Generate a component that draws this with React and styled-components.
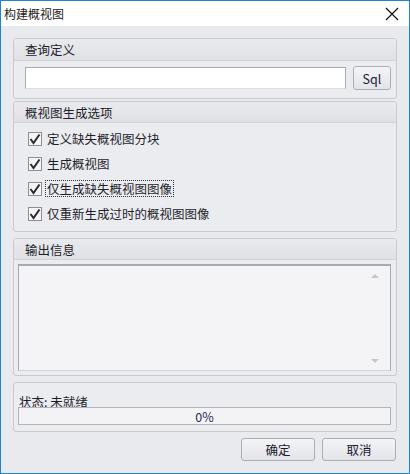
import styled, { createGlobalStyle } from 'styled-components';

const Global = createGlobalStyle`
  html, body { margin: 0; padding: 0; background: #fff; }
  * { box-sizing: border-box; }
`;

const Window = styled.div`
  width: 410px;
  height: 474px;
  border: 1px solid #1a84d8;
  background: #e9eaee;
  display: flex;
  flex-direction: column;
  font-family: "Noto Sans CJK SC", "Noto Sans", sans-serif;
  font-size: 12px;
  color: #1e1e2a;
`;

const TitleBar = styled.div`
  height: 25px;
  background: #fff;
  display: flex;
  align-items: center;
  justify-content: space-between;
  padding: 0 10px 0 3px;
  font-size: 12px;
  color: #222;
  flex-shrink: 0;
`;

const Body = styled.div`
  flex: 1;
  display: flex;
  flex-direction: column;
  padding: 12px 12px 0 12px;
`;

const Group = styled.div`
  border: 1px solid #c9cacd;
  border-radius: 3px;
  background: #ebecf0;
  margin-bottom: ${p => p.$gap || 0}px;
  height: ${p => p.$h}px;
  display: flex;
  flex-direction: column;
  overflow: hidden;
`;

const GroupHeader = styled.div`
  height: ${p => p.$h || 21}px;
  background: linear-gradient(#e9eaee, #e0e1e5);
  border-bottom: 1px solid #d3d4d8;
  padding-left: 11px;
  display: flex;
  align-items: center;
  font-size: 12.5px;
  flex-shrink: 0;
`;

const Row = styled.div`
  display: flex;
  align-items: center;
  gap: 7px;
  padding: 5px 5px 0 11px;
`;

const TextInput = styled.div`
  flex: 1;
  height: 22px;
  background: #fff;
  border: 1px solid #a9abb4;
  border-bottom-color: #dcdde2;
`;

const Button = styled.div`
  width: ${p => p.$w}px;
  height: ${p => p.$ht || 23}px;
  border: 1px solid #adaeb3;
  border-radius: 3px;
  background: linear-gradient(#f3f4f6, #e3e4e8);
  display: flex;
  align-items: center;
  justify-content: center;
  font-size: 12.5px;
  color: #1a1a30;
`;

const CheckList = styled.div`
  display: flex;
  flex-direction: column;
  padding: 7px 0 0 14px;
  gap: 8px;
`;

const CheckRow = styled.div`
  display: flex;
  align-items: center;
  height: 17px;
  gap: 3px;
  font-size: 12.5px;
`;

const Label = styled.span`
  padding: 0 1px;
  line-height: 15px;
  border: 1px dotted ${p => (p.$focus ? '#333' : 'transparent')};
`;

const Scroller = styled.div`
  position: relative;
  margin: 4px 5px 0 4px;
  height: 107px;
  border: 1px solid #a8aab2;
  border-top-width: 2px;
  border-bottom-color: #d2d3d8;
  background: #f4f4f6;
`;

const Arrow = styled.div`
  position: absolute;
  right: 11px;
  width: 0;
  height: 0;
  border-left: 4px solid transparent;
  border-right: 4px solid transparent;
  ${p => (p.$down
    ? 'bottom: 7px; border-top: 4px solid #c6c7cc;'
    : 'top: 8px; border-bottom: 4px solid #c6c7cc;')}
`;

const Status = styled.div`
  padding: 9px 0 0 5px;
  font-size: 12.5px;
  height: 24px;
`;

const Progress = styled.div`
  margin: 0 5px 0 4px;
  height: 18px;
  border: 1px solid #b3b4ba;
  background: #f3f3f5;
  display: flex;
  align-items: center;
  justify-content: center;
  font-size: 12.5px;
  color: #2a2a55;
`;

const Footer = styled.div`
  display: flex;
  justify-content: flex-end;
  gap: 7px;
  padding: 6px 1px 0 0;
`;

const Check = () => (
  <svg width="14" height="14" viewBox="0 0 14 14">
    <rect x="0.5" y="0.5" width="13" height="13" fill="#f5f5f7" stroke="#8e8f96" />
    <path d="M2.5 7 L5.5 11 L11.5 2.5" fill="none" stroke="#2b2b33" strokeWidth="2" />
  </svg>
);

const Close = () => (
  <svg width="14" height="14" viewBox="0 0 14 14">
    <path d="M1 1 L13 13 M13 1 L1 13" stroke="#111" strokeWidth="1.2" />
  </svg>
);

const options = [
  { text: '定义缺失概视图分块' },
  { text: '生成概视图' },
  { text: '仅生成缺失概视图图像', focus: true },
  { text: '仅重新生成过时的概视图图像' },
];

export default function App() {
  return (
    <Window>
      <Global />
      <TitleBar>
        <span>构建概视图</span>
        <Close />
      </TitleBar>
      <Body>
        <Group $h={61} $gap={2}>
          <GroupHeader $h={22}>查询定义</GroupHeader>
          <Row>
            <TextInput />
            <Button $w={38} $ht={24}>Sql</Button>
          </Row>
        </Group>
        <Group $h={131} $gap={6}>
          <GroupHeader>概视图生成选项</GroupHeader>
          <CheckList>
            {options.map(o => (
              <CheckRow key={o.text}>
                <Check />
                <Label $focus={o.focus}>{o.text}</Label>
              </CheckRow>
            ))}
          </CheckList>
        </Group>
        <Group $h={138} $gap={6}>
          <GroupHeader>输出信息</GroupHeader>
          <Scroller>
            <Arrow />
            <Arrow $down />
          </Scroller>
        </Group>
        <Group $h={50}>
          <Status>状态: 未就绪</Status>
          <Progress>0%</Progress>
        </Group>
        <Footer>
          <Button $w={74}>确定</Button>
          <Button $w={74}>取消</Button>
        </Footer>
      </Body>
    </Window>
  );
}
